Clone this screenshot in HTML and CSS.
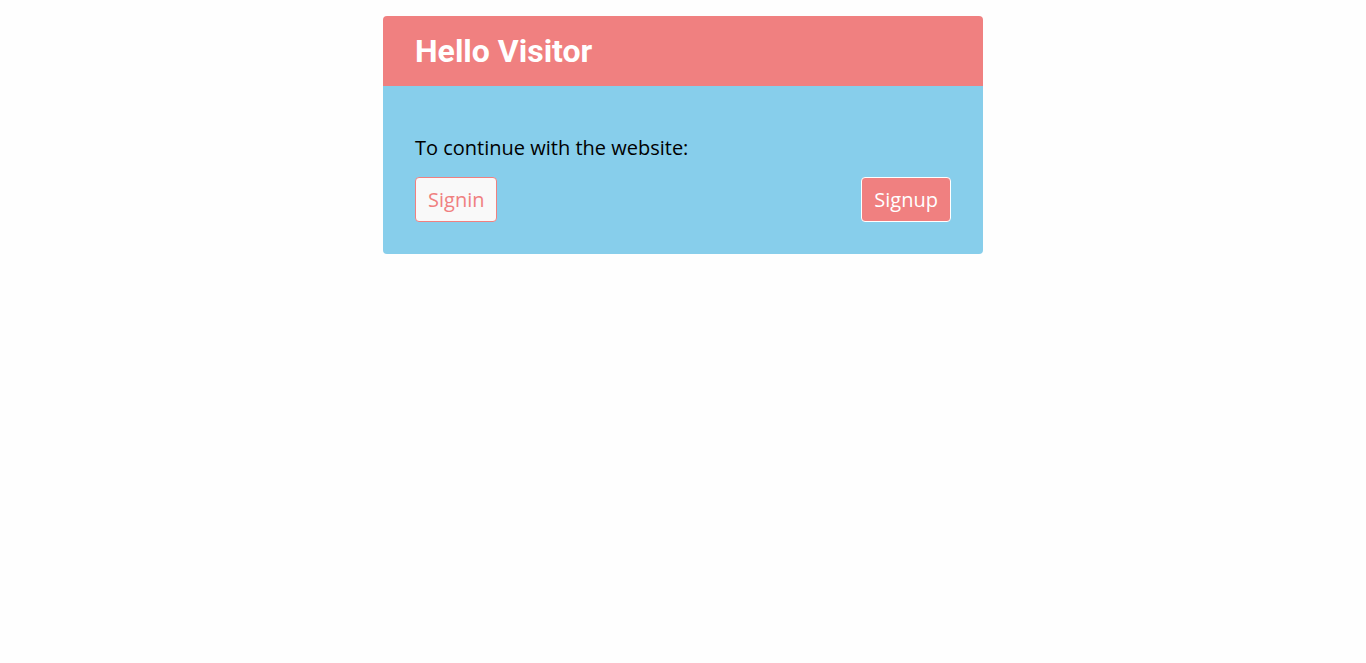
FILE: index.html
```html
<!DOCTYPE html>
<html lang="en">
<head>
<meta charset="utf-8">
<title>Hello Visitor</title>
<link rel="stylesheet" href="styles.css">
</head>
<body>
<div class="card">
  <div class="card-header">
    <h1 class="title">Hello Visitor</h1>
  </div>
  <div class="card-body">
    <p class="message">To continue with the website:</p>
    <div class="actions">
      <button class="btn btn-outline">Signin</button>
      <button class="btn btn-filled">Signup</button>
    </div>
  </div>
</div>
</body>
</html>
```

FILE: styles.css
```css
html, body {
  margin: 0;
  padding: 0;
  background: #fefefe;
}
body {
  padding-top: 16px;
  font-family: "Open Sans", "Liberation Sans", sans-serif;
}
.card {
  width: 600px;
  margin: 0 auto;
  border-radius: 4px;
  overflow: hidden;
}
.card-header {
  background: #f08080;
  height: 70px;
  padding: 0 32px;
  display: flex;
  align-items: center;
  box-sizing: border-box;
}
.title {
  margin: 0;
  font-family: Roboto, "Liberation Sans", sans-serif;
  font-weight: 700;
  font-size: 32px;
  line-height: 38px;
  color: #ffffff;
  padding-top: 0;
}
.card-body {
  background: #87ceeb;
  padding: 32px;
}
.message {
  margin: 16px 0 15px;
  font-size: 20px;
  line-height: 28px;
  color: #000;
}
.actions {
  display: flex;
  justify-content: space-between;
}
.btn {
  font-family: "Open Sans", "Liberation Sans", sans-serif;
  font-size: 20px;
  line-height: 27px;
  padding: 8px 12px;
  border-radius: 4px;
  cursor: pointer;
}
.btn-outline {
  background: #f9f9f9;
  border: 1px solid #f08080;
  color: #f08080;
}
.btn-filled {
  background: #f08080;
  border: 1px solid #ffffff;
  color: #ffffff;
}
```
